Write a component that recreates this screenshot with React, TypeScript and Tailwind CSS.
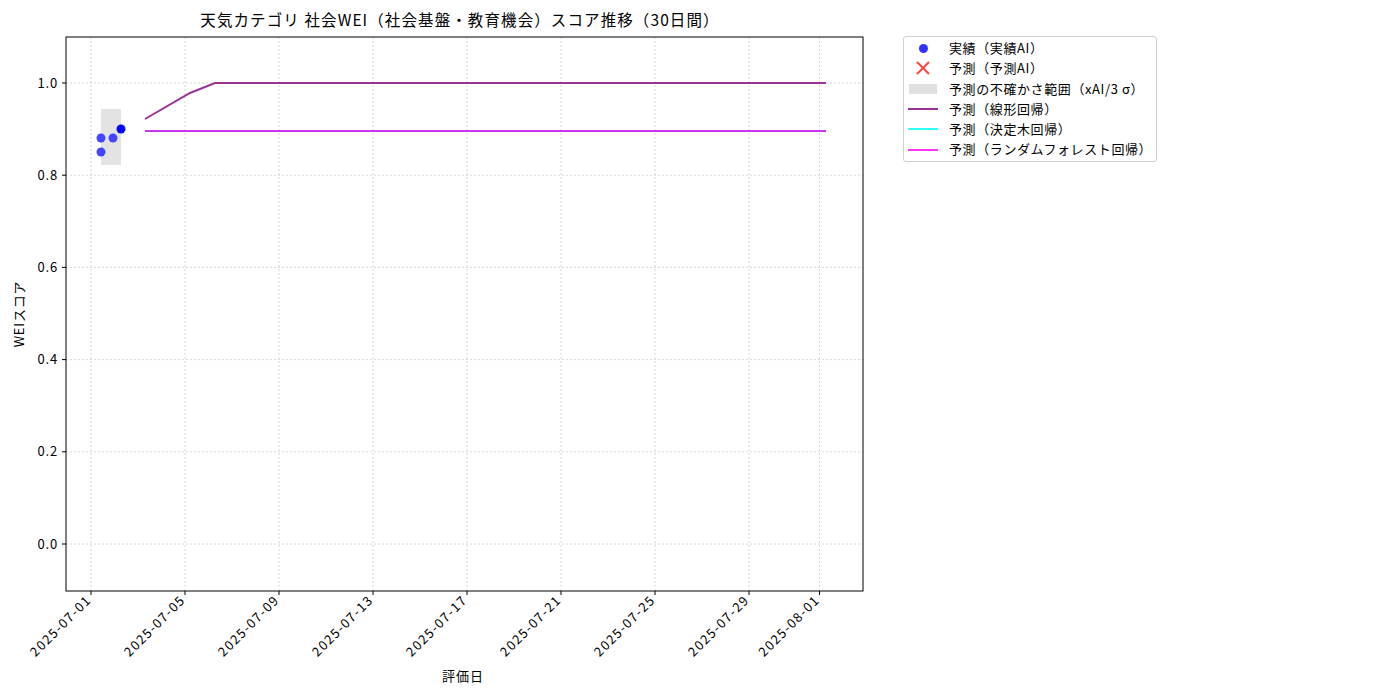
import React from "react";

const F = '"Noto Sans CJK JP", "DejaVu Sans", sans-serif';
const yv = (v: number) => 544 - v * 461;
const xd = (d: number) => 91 + d * 23.5;

export default function App() {
  const yt = [0, 0.2, 0.4, 0.6, 0.8, 1.0];
  const xt = [
    [0, "2025-07-01"], [4, "2025-07-05"], [8, "2025-07-09"], [12, "2025-07-13"],
    [16, "2025-07-17"], [20, "2025-07-21"], [24, "2025-07-25"], [28, "2025-07-29"], [31, "2025-08-01"],
  ] as [number, string][];
  const legend = [
    ["dot", "実績（実績AI）"], ["x", "予測（予測AI）"], ["rect", "予測の不確かさ範囲（xAI/3 σ）"],
    ["#993399", "予測（線形回帰）"], ["#33ffff", "予測（決定木回帰）"], ["#ff33ff", "予測（ランダムフォレスト回帰）"],
  ];
  return (
    <div className="w-[1400px] h-[700px] bg-white flex" style={{ fontFamily: F }}>
      <svg width="880" height="700" className="shrink-0">
        <text x="460" y="26" fontSize="15.5" textAnchor="middle" fontFamily={F} letterSpacing="1.1">天気カテゴリ 社会WEI（社会基盤・教育機会）スコア推移（30日間）</text>
        {yt.map((v) => (
          <g key={v}>
            <line x1="66" x2="863" y1={yv(v)} y2={yv(v)} stroke="#ccc" strokeDasharray="2 2" strokeWidth="0.8" />
            <line x1="62" x2="66" y1={yv(v)} y2={yv(v)} stroke="#000" />
            <text x="58" y={yv(v) + 4.5} fontSize="13" textAnchor="end" fontFamily={F} letterSpacing="0.8">{v.toFixed(1)}</text>
          </g>
        ))}
        {xt.map(([d, s]) => (
          <g key={s}>
            <line x1={xd(d)} x2={xd(d)} y1="37" y2="591" stroke="#ccc" strokeDasharray="2 2" strokeWidth="0.8" />
            <line x1={xd(d)} x2={xd(d)} y1="591" y2="595" stroke="#000" />
            <text transform={`translate(${xd(d) + 1},${601}) rotate(-45)`} fontSize="13" textAnchor="end" fontFamily={F} letterSpacing="1.3">{s}</text>
          </g>
        ))}
        <rect x="101" y="109" width="20" height="56" fill="#dedede" opacity="0.85" />
        <polyline points="145,119 190,93 215,83 826,83" fill="none" stroke="#993399" strokeWidth="2" />
        <line x1="145" x2="826" y1="131" y2="131" stroke="#cc33ee" strokeWidth="2" />
        {[[101, 138], [101, 152], [113, 138]].map(([x, y]) => (
          <circle key={`${x}-${y}`} cx={x} cy={y} r="4.5" fill="#3333ff" opacity="0.9" />
        ))}
        <circle cx="121" cy="129" r="4.5" fill="#0000ff" />
        <rect x="66" y="37" width="797" height="554" fill="none" stroke="#000" strokeWidth="1" />
        <text x="463" y="681" fontSize="13" textAnchor="middle" fontFamily={F} letterSpacing="1">評価日</text>
        <text transform="translate(24,314) rotate(-90)" fontSize="13" textAnchor="middle" fontFamily={F} letterSpacing="0.8">WEIスコア</text>
      </svg>
      <div className="mt-[36px] ml-[23px] h-fit border border-[#d0d0d0] rounded-[3px] px-[4px] py-[1px] text-[13px] leading-[20.3px] tracking-[0.6px]">
        {legend.map(([k, t]) => (
          <div key={t} className="flex items-center">
            <div className="w-[30px] mr-[11px] flex justify-center">
              {k === "dot" ? <div className="w-[9px] h-[9px] rounded-full bg-[#3333ff]" /> :
               k === "x" ? (
                 <svg width="14" height="14"><path d="M1 1L13 13M13 1L1 13" stroke="#ff4444" strokeWidth="2" /></svg>
               ) :
               k === "rect" ? <div className="w-[28px] h-[10px] bg-[#e0e0e0]" /> :
               <div className="w-[30px] h-[2px]" style={{ background: k }} />}
            </div>
            <span>{t}</span>
          </div>
        ))}
      </div>
    </div>
  );
}
